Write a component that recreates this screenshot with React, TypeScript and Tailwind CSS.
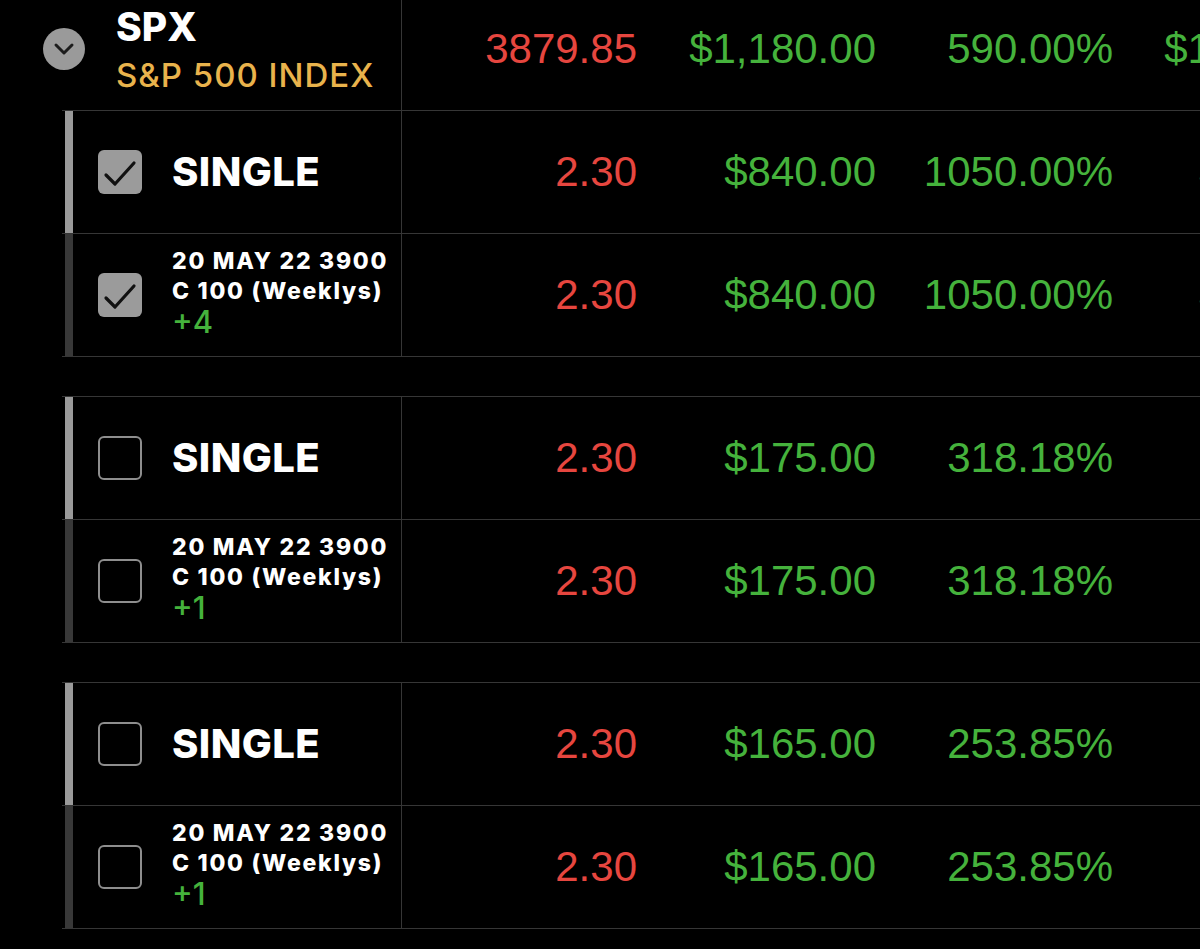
import React from 'react';

const RED = 'text-[#e6463f]';
const GREEN = 'text-[#45b23c]';

type Leg = {
  checked: boolean;
  price: string;
  pl: string;
  pct: string;
  extra: string;
  qty: string;
};

const groups: Leg[] = [
  { checked: true, price: '2.30', pl: '$840.00', pct: '1050.00%', extra: '$840.00', qty: '+4' },
  { checked: false, price: '2.30', pl: '$175.00', pct: '318.18%', extra: '$55.00', qty: '+1' },
  { checked: false, price: '2.30', pl: '$165.00', pct: '253.85%', extra: '$65.00', qty: '+1' },
];

function Checkbox({ checked }: { checked: boolean }) {
  if (checked) {
    return (
      <div className="flex h-[44px] w-[44px] shrink-0 items-center justify-center rounded-[6px] bg-[#9b9b9b]">
        <svg width="44" height="44" viewBox="0 0 44 44" fill="none">
          <polyline
            points="8,25 17,34 36,13"
            stroke="#111111"
            strokeWidth="3.2"
            strokeLinecap="round"
            strokeLinejoin="round"
          />
        </svg>
      </div>
    );
  }
  return <div className="h-[44px] w-[44px] shrink-0 rounded-[6px] border-2 border-[#8e8e8e]" />;
}

function Values({ price, pl, pct, extra }: { price: string; pl: string; pct: string; extra: string }) {
  return (
    <div className="flex font-['Liberation_Sans',Arial,sans-serif] text-[42px] leading-none">
      <div className={`w-[235px] text-right ${RED}`}>{price}</div>
      <div className={`w-[239px] text-right ${GREEN}`}>{pl}</div>
      <div className={`w-[237px] text-right ${GREEN}`}>{pct}</div>
      <div className={`w-[238px] shrink-0 text-right ${GREEN}`}>{extra}</div>
    </div>
  );
}

function Group({ leg, first }: { leg: Leg; first: boolean }) {
  return (
    <div className={`ml-[62px] border-y border-[#363636] ${first ? '' : 'mt-[39px]'}`}>
      <div className="flex h-[123px] items-center border-b border-[#363636]">
        <div className="flex h-full w-[340px] shrink-0 items-center border-r border-[#363636]">
          <div className="ml-[3px] h-full w-[8px] bg-[#9a9a9a]" />
          <div className="ml-[25px]">
            <Checkbox checked={leg.checked} />
          </div>
          <div className="ml-[30px] font-['Inter',sans-serif] text-[40px] font-extrabold leading-none tracking-[0.01em] text-white">
            SINGLE
          </div>
        </div>
        <Values {...leg} />
      </div>
      <div className="flex h-[122px] items-center">
        <div className="flex h-full w-[340px] shrink-0 items-center border-r border-[#363636]">
          <div className="ml-[3px] h-full w-[8px] bg-[#383838]" />
          <div className="ml-[25px]">
            <Checkbox checked={leg.checked} />
          </div>
          <div className="mb-[7px] ml-[30px] flex flex-col font-['Inter',sans-serif] text-white">
            <span className="text-[23px] font-extrabold leading-[30px] tracking-[0.075em]">20 MAY 22 3900</span>
            <span className="text-[23px] font-extrabold leading-[30px] tracking-[0.075em]">C 100 (Weeklys)</span>
            <span className={`text-[31px] font-medium leading-[32px] ${GREEN}`}>{leg.qty}</span>
          </div>
        </div>
        <Values {...leg} />
      </div>
    </div>
  );
}

export default function App() {
  return (
    <div className="h-[949px] w-[1200px] overflow-hidden bg-black">
      <div className="mt-[-13px] flex h-[123px] items-center">
        <div className="flex h-full w-[402px] shrink-0 items-center border-r border-[#363636]">
          <div className="ml-[43px] flex h-[42px] w-[42px] items-center justify-center rounded-full bg-[#9a9a9a]">
            <svg width="22" height="14" viewBox="0 0 22 14" fill="none">
              <polyline
                points="3,3 11,11 19,3"
                stroke="#1c1c1c"
                strokeWidth="3"
                strokeLinecap="round"
                strokeLinejoin="round"
              />
            </svg>
          </div>
          <div className="ml-[31px] flex flex-col font-['Inter',sans-serif]">
            <span className="text-[39px] font-extrabold leading-[44px] text-white">SPX</span>
            <span className="mt-[8px] text-[33px] font-medium leading-[36px] tracking-[0.03em] text-[#e9b34c]">
              S&amp;P 500 INDEX
            </span>
          </div>
        </div>
        <Values price="3879.85" pl="$1,180.00" pct="590.00%" extra="$1,180.00" />
      </div>
      {groups.map((leg, i) => (
        <Group key={i} leg={leg} first={i === 0} />
      ))}
    </div>
  );
}
